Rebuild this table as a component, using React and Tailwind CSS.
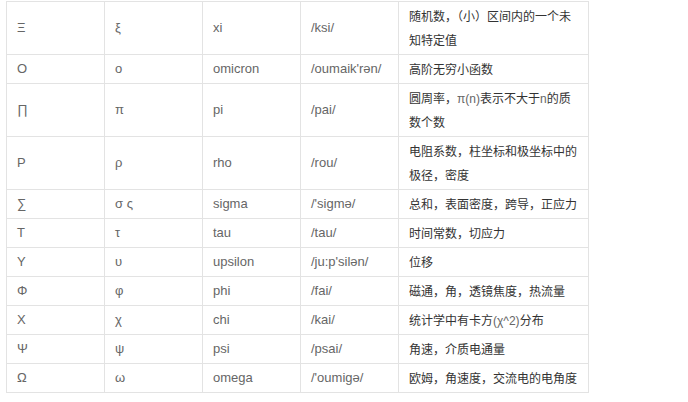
import React from "react";

const L = ({ children }) => (
  <span className="text-[#666] text-[12px] leading-none" style={{ fontFamily: '"Liberation Sans", Arial, sans-serif' }}>{children}</span>
);

const rows = [
  ["Ξ", "ξ", "xi", "/ksi/", ["随机数，（小）区间内的一个未", "知特定值"]],
  ["Ο", "ο", "omicron", "/oumaik'rən/", ["高阶无穷小函数"]],
  ["∏", "π", "pi", "/pai/", [<>圆周率，<L>π(n)</L>表示不大于<L>n</L>的质</>, "数个数"]],
  ["Ρ", "ρ", "rho", "/rou/", ["电阻系数，柱坐标和极坐标中的", "极径，密度"]],
  ["∑", "σ ς", "sigma", "/'sigmə/", ["总和，表面密度，跨导，正应力"]],
  ["Τ", "τ", "tau", "/tau/", ["时间常数，切应力"]],
  ["Υ", "υ", "upsilon", "/ju:p'silən/", ["位移"]],
  ["Φ", "φ", "phi", "/fai/", ["磁通，角，透镜焦度，热流量"]],
  ["Χ", "χ", "chi", "/kai/", [<>统计学中有卡方<L>(χ^2)</L>分布</>]],
  ["Ψ", "ψ", "psi", "/psai/", ["角速，介质电通量"]],
  ["Ω", "ω", "omega", "/'oumigə/", ["欧姆，角速度，交流电的电角度"]],
];

export default function App() {
  return (
    <div className="w-[688px] h-[402px] bg-white pl-[6px] pt-[1px] overflow-hidden" style={{ fontFamily: '"Liberation Sans", Arial, "Noto Sans CJK SC", sans-serif' }}>
      <table className="table-fixed border-collapse w-[582px]">
        <colgroup>
          <col className="w-[98px]" />
          <col className="w-[98px]" />
          <col className="w-[98px]" />
          <col className="w-[98px]" />
          <col className="w-[190px]" />
        </colgroup>
        <tbody>
          {rows.map((r, i) => (
            <tr key={i}>
              {r.slice(0, 4).map((c, j) => (
                <td key={j} className="border border-[#e3e3e3] px-[10px] py-[2px] leading-[24px] text-[13px] text-[#666] whitespace-nowrap align-middle">
                  {c}
                </td>
              ))}
              <td className="border border-[#e3e3e3] px-[10px] py-[2px] leading-[24px] text-[12px] text-[#333] whitespace-nowrap align-middle" style={{ fontFamily: '"Noto Sans CJK SC", sans-serif' }}>
                {r[4].map((l, k) => (
                  <div key={k} className="h-[24px]">{l}</div>
                ))}
              </td>
            </tr>
          ))}
        </tbody>
      </table>
    </div>
  );
}
